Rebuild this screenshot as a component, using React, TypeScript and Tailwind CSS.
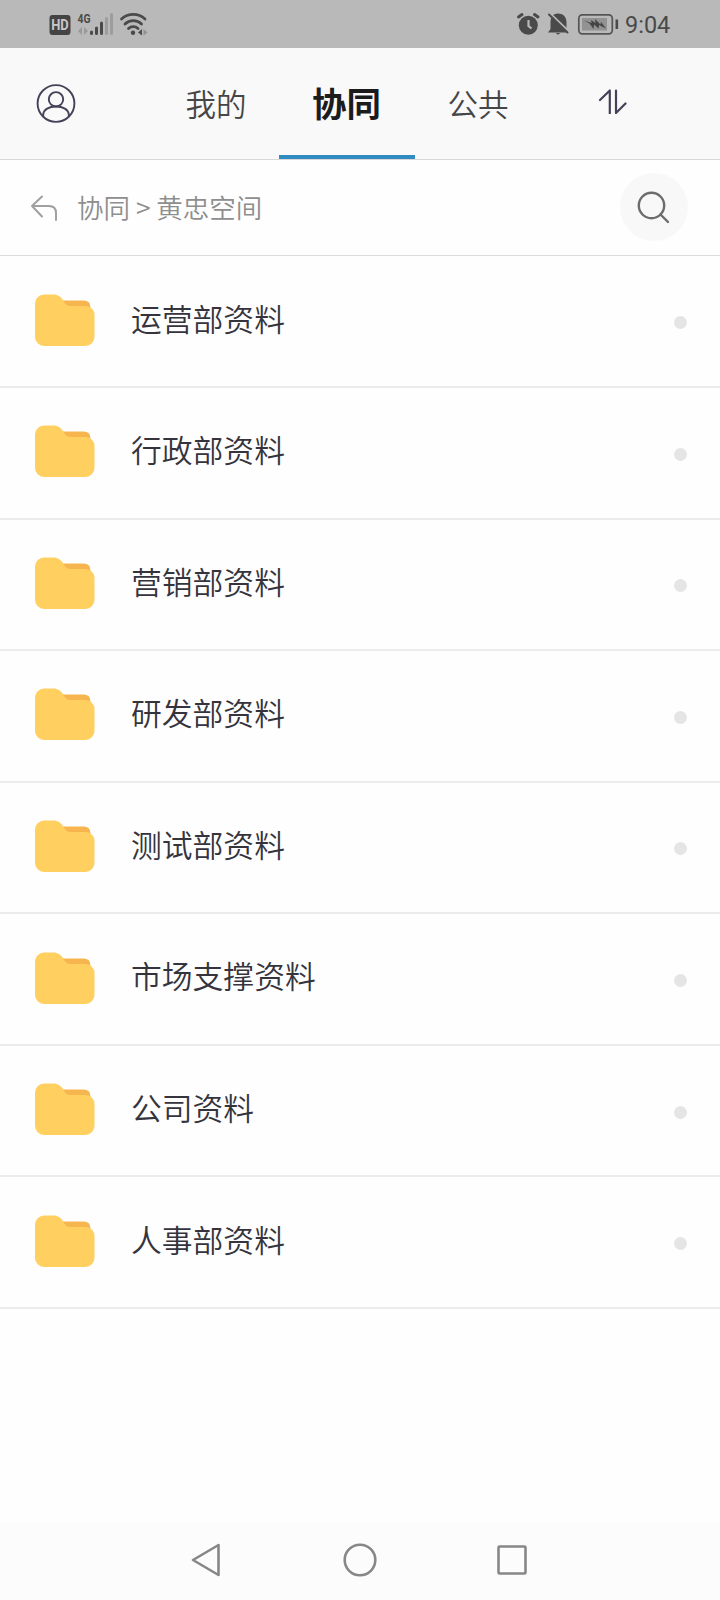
const FOLDERS = [
  "运营部资料",
  "行政部资料",
  "营销部资料",
  "研发部资料",
  "测试部资料",
  "市场支撑资料",
  "公司资料",
  "人事部资料",
];

function StatusBar() {
  return (
    <header className="flex h-12 shrink-0 items-center justify-between bg-[#b9b9b9] pl-[49px] pr-[49px] text-[#4a4a4a]">
      <svg width="104" height="48" viewBox="49 0 104 48" fill="none">
        <rect x="49.5" y="15" width="21" height="20" rx="3" fill="#444" />
        <text x="60" y="30" textAnchor="middle" fontFamily="Roboto" fontSize="14" fontWeight="700" fill="#c8c8c8" textLength="17.500" lengthAdjust="spacingAndGlyphs">HD</text>
        <text x="77.500" y="22.800" fontFamily="Roboto" fontSize="13" fontWeight="700" fill="#4a4a4a" textLength="13" lengthAdjust="spacingAndGlyphs">4G</text>
        <path d="M78 31l4-4v8zM88 31l-4-4v8z" fill="#9a9a9a" />
        <path d="M91.500 32v1.500M96.500 28v5.500M101.500 23v10.500" stroke="#4a4a4a" strokeWidth="3" strokeLinecap="round" />
        <path d="M106.500 18.500v15M111.500 14.500v19" stroke="#9d9d9d" strokeWidth="3" strokeLinecap="round" />
        <path d="M121.500 19a17.500 17.500 0 0 1 23.500 0M125 24a12 12 0 0 1 16.500 0M128.500 28.500a7 7 0 0 1 9.500 0" stroke="#4a4a4a" strokeWidth="2.800" strokeLinecap="round" />
        <circle cx="133" cy="32.800" r="2.200" fill="#4a4a4a" />
        <path d="M138 32.500l4-3.500v6.500z" fill="#4a4a4a" />
        <path d="M147.500 32.500l-4-3.500v6.500z" fill="#929292" />
      </svg>
      <div className="flex items-center">
        <svg width="104" height="48" viewBox="516 0 104 48" fill="none">
          <circle cx="528.300" cy="25.300" r="9.500" fill="#4a4a4a" />
          <path d="M518.500 17l3.500-2.500M534.500 14.500l3.500 2.500" stroke="#4a4a4a" strokeWidth="3" strokeLinecap="round" />
          <path d="M528.500 20v6l3 2.500" stroke="#b9b9b9" strokeWidth="2.200" />
          <path d="M558 13.500c6 0 8.500 4 8.500 9v7l2 3h-20.500l2.500-3.500v-6.500c0-5 2-9 7.500-9zM556 33h4q-2 3-4 0z" fill="#4a4a4a" />
          <path d="M548.500 12.500l21 20" stroke="#b9b9b9" strokeWidth="3" />
          <path d="M549 14.500l18.500 18" stroke="#4a4a4a" strokeWidth="2" strokeLinecap="round" />
          <rect x="578.800" y="14.800" width="33.500" height="19" rx="3.500" stroke="#555" strokeWidth="1.700" />
          <rect x="582" y="18" width="25" height="12.500" fill="#929292" />
          <path d="M584 20.500l7.500 2.500-.5-3 4.500 3-.500-4 5.500 5.500.5-2.500 5 6.500-7-3.500-.5 3.500-4.500-4-.5 4.500-4-5.500z" fill="#444" />
          <path d="M616.800 19.500v9.500" stroke="#4a4a4a" strokeWidth="2.600" />
        </svg>
        <span className="w-[51px] pl-[5px] pt-[3px] font-[Roboto,sans-serif] text-[23.5px] leading-none">9:04</span>
      </div>
    </header>
  );
}

function TopNav() {
  return (
    <nav className="flex h-[112px] shrink-0 border-b border-[#d9d9db] bg-[#f9f9fa]">
      <div className="flex w-[149px] pl-9 pt-[35px]">
        <svg width="40" height="40" viewBox="0 0 40 40" fill="none" stroke="#454158" strokeWidth="1.900">
          <circle cx="20" cy="20.500" r="18.400" />
          <circle cx="20" cy="16.300" r="7.200" />
          <path d="M7.200 33.500V31.500C7.500 26.500 13 23.500 20 23.500S32.500 26.500 32.800 31.500V33.500" />
        </svg>
      </div>
      <button className="w-[130px] pl-1 pt-px text-[30.5px] font-[350] text-[#464646]">我的</button>
      <button className="w-[136px] border-b-4 border-[#318cc2] pr-px pt-0.5 text-[34.5px] font-bold text-[#1c1c1c]">协同</button>
      <button className="w-[128px] pr-0.5 pt-px text-[30.5px] font-[350] text-[#464646]">公共</button>
      <div className="pl-[55px] pt-9">
        <svg width="30" height="30" viewBox="598 84 30 30" fill="none" stroke="#454158" strokeWidth="2.200" strokeLinecap="round" strokeLinejoin="round">
          <path d="M600 100l9.800-9.500v23M616 90.500v22.500l9.500-9.500" />
        </svg>
      </div>
    </nav>
  );
}

function Breadcrumb() {
  return (
    <div className="flex h-24 shrink-0 items-center border-b border-[#dcdcdc] pl-[30px] pr-8">
      <svg width="28" height="28" viewBox="30 193 28 28" fill="none" stroke="#a0a0a0" strokeWidth="2" strokeLinecap="round" strokeLinejoin="round">
        <path d="M42 195.500L32 205l10 10.500M32 205h17c5 0 7 3 7 7v7" />
      </svg>
      <span className="grow whitespace-pre pb-px pl-[19px] text-[26.500px] font-[350] text-[#8e8e8e]">协同 &gt; 黄忠空间</span>
      <button className="mb-0.5 flex size-[68px] items-center justify-center rounded-full bg-[#f8f8f8]">
        <svg width="34" height="34" viewBox="0 0 34 34" fill="none" stroke="#6c6c6c" strokeWidth="2.400" strokeLinecap="round">
          <circle cx="14.500" cy="15.500" r="12.700" />
          <path d="M23.500 24.500l7.500 7.500" />
        </svg>
      </button>
    </div>
  );
}

function FolderIcon() {
  return (
    <svg className="mb-0.5" width="60" height="53" viewBox="0 0 60 53">
      <path d="M26 6.500h22.500q7 0 7 7l1 6H26z" fill="#f7b54f" />
      <path d="M0 9.500a9 9 0 0 1 9-9h9c5 0 8.500 2.500 10.500 6.500 1.500 3 3.500 5 7 5h15a9 9 0 0 1 9 9.500v21.500a9 9 0 0 1-9 9H9a9 9 0 0 1-9-9z" fill="#ffd060" />
    </svg>
  );
}

function FolderRow({ name }: { name: string }) {
  return (
    <li className="flex h-[131.55px] items-center border-b-2 border-[#ebebeb] pl-[34.6px] pr-[33px]">
      <FolderIcon />
      <span className="grow pb-[7px] pl-[36.4px] text-[30.8px] font-[350] text-[#35343d]">{name}</span>
      <span className="mt-[3px] size-[13px] rounded-full bg-[#e5e5e5]" />
    </li>
  );
}

function SystemNav() {
  return (
    <footer className="flex h-[78px] shrink-0 items-center justify-center bg-[#fcfcfc] pb-0.5">
      <svg width="340" height="40" viewBox="190 1540 340 40" fill="none" stroke="#878787" strokeWidth="2.600" strokeLinejoin="round">
        <path d="M193 1560L218.500 1545v30z" />
        <circle cx="360" cy="1560" r="15.300" />
        <rect x="498.500" y="1546.500" width="27" height="27" rx="1" />
      </svg>
    </footer>
  );
}

export default function App() {
  return (
    <div className="flex h-[1600px] w-[720px] flex-col overflow-hidden bg-[#fefefe] font-['Noto_Sans_CJK_SC',sans-serif]">
      <StatusBar />
      <TopNav />
      <Breadcrumb />
      <ul className="grow pt-[0.5px]">
        {FOLDERS.map((name) => (
          <FolderRow key={name} name={name} />
        ))}
      </ul>
      <SystemNav />
    </div>
  );
}
